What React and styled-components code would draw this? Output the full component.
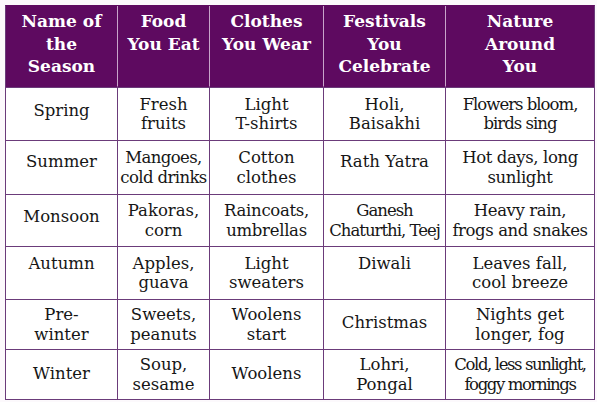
import React from 'react';
import styled, { createGlobalStyle } from 'styled-components';

const Global = createGlobalStyle`
  html, body { margin: 0; padding: 0; background: #fcf9fc; }
`;

const Page = styled.div`
  padding: 5px 0 0 5px;
`;

const Table = styled.div`
  display: grid;
  grid-template-columns: 111px 92px 114px 122px 149px;
  grid-template-rows: 81px 53px 54px 52px 53px 50px 50px;
  width: max-content;
  border: 1px solid #6b3b7a;
  border-top-color: #5e0a60;
  box-sizing: border-box;
  background: #ffffff;
`;

const HeadCell = styled.div`
  background: #5e0a60;
  color: #ffffff;
  font-family: "DejaVu Serif", serif;
  font-weight: bold;
  font-size: 17px;
  line-height: 22.5px;
  text-align: center;
  padding-top: 4px;
  white-space: nowrap;
  border-left: ${p => (p.$first ? 'none' : '1px solid #c8a4ca')};
  border-bottom: 1px solid #5e0a60;
`;

const Cell = styled.div`
  display: flex;
  flex-direction: column;
  align-items: center;
  justify-content: center;
  text-align: center;
  white-space: nowrap;
  font-family: "DejaVu Serif", serif;
  font-size: 16.5px;
  line-height: 19.5px;
  color: #161616;
  letter-spacing: ${p => p.$squeeze || 0}px;
  border-top: 1px solid #6b3b7a;
  border-left: ${p => (p.$first ? 'none' : '1px solid #6b3b7a')};
  padding-bottom: ${p => p.$lift * 2}px;
`;

const heads = [
  ['Name of', 'the', 'Season'],
  ['Food', 'You Eat'],
  ['Clothes', 'You Wear'],
  ['Festivals', 'You', 'Celebrate'],
  ['Nature', 'Around', 'You'],
];

const rows = [
  { lift: 3, cells: [['Spring'], ['Fresh', 'fruits'], ['Light', 'T-shirts'], ['Holi,', 'Baisakhi'], ['Flowers bloom,', 'birds sing']] },
  { lift: 5.5, cells: [['Summer'], ['Mangoes,', 'cold drinks'], ['Cotton', 'clothes'], ['Rath Yatra'], ['Hot days, long', 'sunlight']] },
  { lift: 3.5, cells: [['Monsoon'], ['Pakoras,', 'corn'], ['Raincoats,', 'umbrellas'], ['Ganesh', 'Chaturthi, Teej'], ['Heavy rain,', 'frogs and snakes']] },
  { lift: 9, cells: [['Autumn'], ['Apples,', 'guava'], ['Light', 'sweaters'], ['Diwali'], ['Leaves fall,', 'cool breeze']] },
  { lift: 1.5, cells: [['Pre-', 'winter'], ['Sweets,', 'peanuts'], ['Woolens', 'start'], ['Christmas'], ['Nights get', 'longer, fog']] },
  { lift: 1, cells: [['Winter'], ['Soup,', 'sesame'], ['Woolens'], ['Lohri,', 'Pongal'], ['Cold, less sunlight,', 'foggy mornings']] },
];

const squeeze = {
  'Cold, less sunlight,': -1.4,
  'Flowers bloom,': -1.0,
  'Chaturthi, Teej': -1.0,
  'cold drinks': -0.6,
  'frogs and snakes': -0.4,
  'Hot days, long': -0.4,
  'Raincoats,': -0.3,
};

const squeezeFor = (lines) => {
  for (const l of lines) if (squeeze[l] !== undefined) return squeeze[l];
  return 0;
};

export default function App() {
  return (
    <>
      <Global />
      <Page>
        <Table>
          {heads.map((h, i) => (
            <HeadCell key={'h' + i} $first={i === 0}>
              {h.map((l, j) => (
                <div key={j}>{l}</div>
              ))}
            </HeadCell>
          ))}
          {rows.map((r, ri) =>
            r.cells.map((c, ci) => (
              <Cell
                key={ri + '-' + ci}
                $first={ci === 0}
                $lift={c.length === 1 ? r.lift : 0}
                $squeeze={squeezeFor(c)}
              >
                {c.map((l, j) => (
                  <span key={j}>{l}</span>
                ))}
              </Cell>
            ))
          )}
        </Table>
      </Page>
    </>
  );
}
